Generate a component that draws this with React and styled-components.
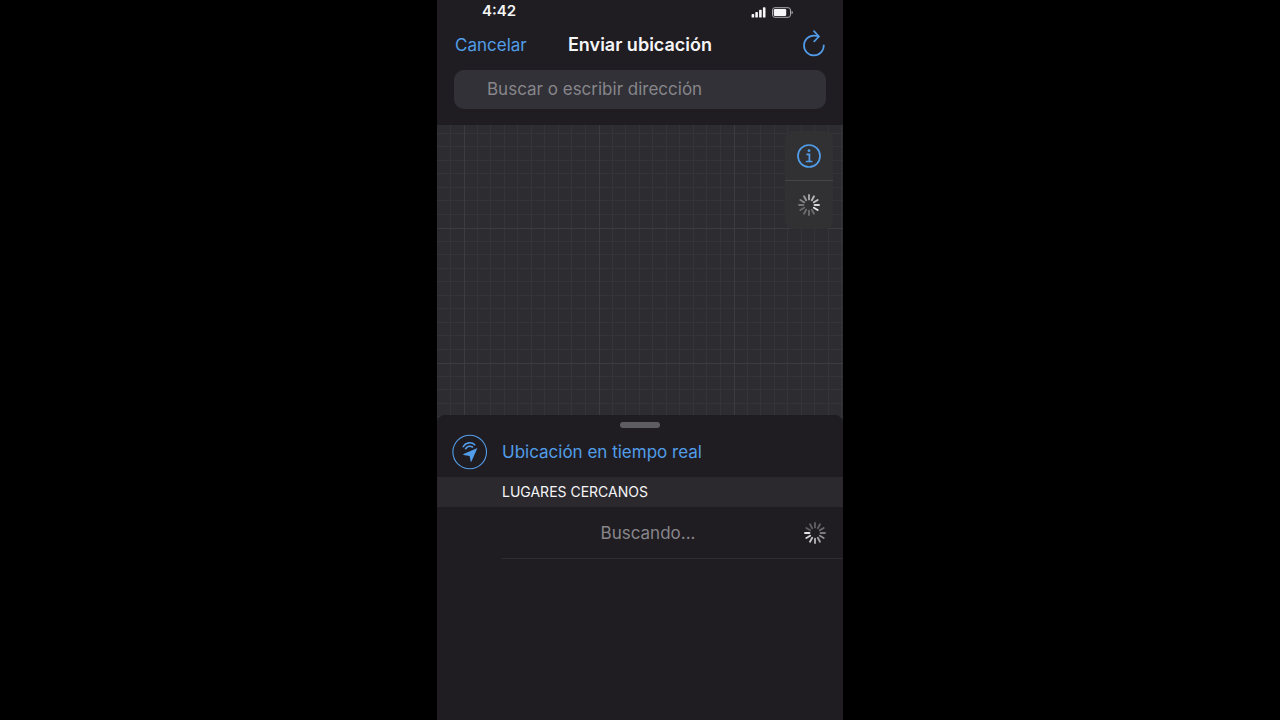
import React from 'react';
import styled, { createGlobalStyle } from 'styled-components';

const color = {
  sheet: '#201d22',
  band: '#2b292e',
  field: '#323137',
  map: '#2d2c30',
  panel: '#313133',
  line: '#2f2d32',
  blue: '#519de9',
  white: '#f6f5f7',
  muted: '#87868b',
};

const GlobalStyle = createGlobalStyle`
  * { box-sizing: border-box; }
  body { margin: 0; background: #000; }
  button { border: 0; padding: 0; background: none; font: inherit; color: inherit; cursor: pointer; }
  svg { display: block; }
`;

const Phone = styled.main`
  display: flex;
  flex-direction: column;
  width: 100%;
  max-width: 406px;
  min-height: 100vh;
  margin: 0 auto;
  background: ${color.sheet};
  color: ${color.white};
  font-family: Inter, 'Liberation Sans', sans-serif;
  font-size: 17px;
  line-height: 24px;
`;

const StatusBar = styled.div`
  display: flex;
  align-items: center;
  justify-content: space-between;
  height: 24px;
  padding: 0 50px 2px 45px;
`;

const Clock = styled.time`
  font-size: 15px;
  line-height: 20px;
  font-weight: 600;
`;

const StatusIcons = styled.div`
  display: flex;
  align-items: center;
  gap: 6px;
  padding-top: 2px;
`;

const NavBar = styled.header`
  display: grid;
  grid-template-columns: 1fr auto 1fr;
  align-items: center;
  height: 42px;
  padding: 0 18px;
`;

const Title = styled.h1`
  margin: 0;
  font-size: 18px;
  line-height: 24px;
  font-weight: 600;
`;

const NavButton = styled.button`
  justify-self: ${(p) => p.$side};
  color: ${color.blue};
`;

const SearchForm = styled.form`
  padding: 4px 17px 16px;
`;

const SearchInput = styled.input`
  display: block;
  width: 100%;
  height: 39px;
  padding: 0 33px 2px;
  border: 0;
  border-radius: 10px;
  outline: 0;
  background: ${color.field};
  color: ${color.white};
  font: inherit;
  &::placeholder { color: ${color.muted}; opacity: 1; }
`;

const MapArea = styled.section`
  position: relative;
  height: 298px;
  background: ${color.map};
`;

const MapControls = styled.div`
  position: absolute;
  top: 6px;
  right: 10px;
  width: 48px;
  border-radius: 8px;
  background: ${color.panel};
`;

const ControlCell = styled.div`
  display: flex;
  align-items: center;
  justify-content: center;
  height: 49px;
  color: ${color.blue};
  & + & { border-top: 1px solid #454547; }
`;

const Sheet = styled.section`
  position: relative;
  flex: 1;
  margin-top: -8px;
  border-radius: 8px 8px 0 0;
  background: ${color.sheet};
`;

const Handle = styled.div`
  width: 40px;
  height: 6px;
  margin: 0 auto;
  border-radius: 3px;
  background: #5e5d61;
`;

const HandleArea = styled.div`
  padding: 7px 0 2px;
`;

const LiveButton = styled.button`
  display: flex;
  align-items: center;
  gap: 14px;
  width: 100%;
  height: 47px;
  padding: 0 15px 3px;
  color: ${color.blue};
  text-align: left;
`;

const LiveLabel = styled.span`
  padding-bottom: 1px;
`;

const SectionTitle = styled.h2`
  margin: 0;
  padding: 5px 16px 5px 65px;
  background: ${color.band};
  font-size: 14px;
  line-height: 20px;
  font-weight: 400;
`;

const SearchingRow = styled.div`
  display: flex;
  align-items: center;
  height: 52px;
  margin-left: 65px;
  padding-right: 17px;
  border-bottom: 1px solid ${color.line};
  color: ${color.muted};
`;

const SearchingText = styled.span`
  flex: 1;
  padding-right: 10px;
  text-align: center;
`;

function MapGrid() {
  const minor = [14, 27, 41, 54, 68, 81, 95, 108, 122];
  return (
    <svg width="100%" height="100%" aria-hidden="true">
      <defs>
        <pattern id="grid" x="27" y="103" width="135" height="135" patternUnits="userSpaceOnUse">
          {minor.map((n) => (
            <g key={n} fill="#353439">
              <rect x={n - 1} width="1" height="135" />
              <rect y={n - 1} width="135" height="1" />
            </g>
          ))}
          <rect width="1" height="135" fill="#3c3b40" />
          <rect width="135" height="1" fill="#3c3b40" />
        </pattern>
      </defs>
      <rect width="100%" height="100%" fill="url(#grid)" />
    </svg>
  );
}

function Spinner({ label, start }) {
  return (
    <svg width="22" height="22" viewBox="0 0 22 22" role="img" aria-label={label}>
      {Array.from({ length: 12 }, (_, i) => (
        <line
          key={i}
          x1="11"
          y1="1"
          x2="11"
          y2="5.4"
          stroke="#f1f0f2"
          strokeWidth="1.9"
          strokeLinecap="round"
          opacity={Math.max(0.3, 0.95 - ((start - i + 12) % 12) * 0.085)}
          transform={`rotate(${i * 30} 11 11)`}
        />
      ))}
    </svg>
  );
}

const SignalIcon = () => (
  <svg width="15" height="11" viewBox="0 0 15 11" fill={color.white} aria-hidden="true">
    <rect x=".6" y="7" width="2.6" height="3.6" rx=".7" />
    <rect x="4.3" y="5" width="2.6" height="5.6" rx=".7" />
    <rect x="8.1" y="2.8" width="2.6" height="7.8" rx=".7" />
    <rect x="11.9" y=".2" width="2.6" height="10.4" rx=".7" />
  </svg>
);

const BatteryIcon = () => (
  <svg width="21" height="11" viewBox="0 0 21 11" aria-hidden="true">
    <rect x=".5" y=".7" width="18" height="9.6" rx="2.4" fill="none" stroke="#aaa9ac" />
    <rect x="1.8" y="2" width="12.4" height="7" rx="1.2" fill={color.white} />
    <path d="M19.6 3.8c1.5.5 1.5 2.9 0 3.4z" fill="#c5c4c7" />
  </svg>
);

const RefreshIcon = () => (
  <svg width="22" height="30" viewBox="0 0 22 30" fill="none" stroke="currentColor" strokeWidth="1.7" strokeLinecap="round" strokeLinejoin="round" aria-hidden="true">
    <path d="M20.8 15.3A9.9 9.9 0 1 1 11 5.6Q13.4 5.6 15.6 6.5" />
    <path d="M11 1.2 16 6.5 11.2 11.3" />
  </svg>
);

const InfoIcon = () => (
  <svg width="24" height="24" viewBox="0 0 24 24" fill="none" stroke="currentColor" strokeWidth="1.7" aria-hidden="true">
    <circle cx="12" cy="12" r="11" />
    <path d="M9.4 10.3h3v7M8.8 17.5h6.6" />
    <circle cx="12" cy="6.7" r="1.4" fill="currentColor" stroke="none" />
  </svg>
);

const LiveLocationIcon = () => (
  <svg width="36" height="36" viewBox="0 0 36 36" fill="none" stroke="currentColor" aria-hidden="true">
    <circle cx="17.7" cy="18" r="16.8" strokeWidth="1.1" />
    <path d="M25.4 14 11.5 20.1Q10.8 20.6 11.6 20.9L17.6 22.1 18.7 27.6Q19.1 28.3 19.5 27.5Z" fill="currentColor" stroke="none" />
    <path d="M11.2 12.6C13.8 8.4 19.4 7.5 22.7 10.8M13.6 14.7C15.3 12.2 18.2 11.6 20.5 13" strokeWidth="1.6" strokeLinecap="round" />
  </svg>
);

export default function App() {
  return (
    <>
      <GlobalStyle />
      <Phone>
        <StatusBar>
          <Clock>4:42</Clock>
          <StatusIcons>
            <SignalIcon />
            <BatteryIcon />
          </StatusIcons>
        </StatusBar>
        <NavBar>
          <NavButton type="button" $side="start">Cancelar</NavButton>
          <Title>Enviar ubicación</Title>
          <NavButton type="button" $side="end" aria-label="Actualizar">
            <RefreshIcon />
          </NavButton>
        </NavBar>
        <SearchForm role="search">
          <SearchInput type="text" aria-label="Buscar o escribir dirección" placeholder="Buscar o escribir dirección" />
        </SearchForm>
        <MapArea aria-label="Mapa">
          <MapGrid />
          <MapControls>
            <ControlCell>
              <button type="button" aria-label="Información">
                <InfoIcon />
              </button>
            </ControlCell>
            <ControlCell>
              <Spinner label="Cargando" start={4} />
            </ControlCell>
          </MapControls>
        </MapArea>
        <Sheet>
          <HandleArea>
            <Handle />
          </HandleArea>
          <LiveButton type="button">
            <LiveLocationIcon />
            <LiveLabel>Ubicación en tiempo real</LiveLabel>
          </LiveButton>
          <SectionTitle>LUGARES CERCANOS</SectionTitle>
          <SearchingRow>
            <SearchingText>Buscando...</SearchingText>
            <Spinner label="Buscando" start={9} />
          </SearchingRow>
        </Sheet>
      </Phone>
    </>
  );
}
